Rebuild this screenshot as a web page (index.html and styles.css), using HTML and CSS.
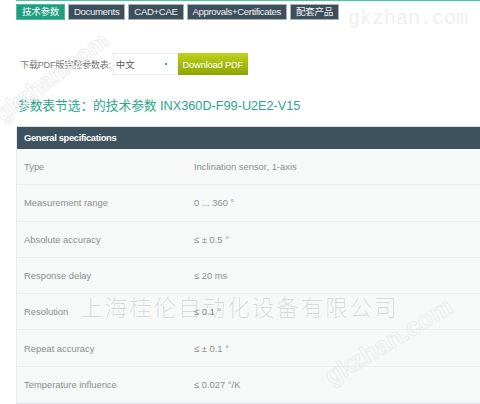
FILE: index.html
```html
<!DOCTYPE html>
<html lang="zh">
<head>
<meta charset="utf-8">
<title>技术参数</title>
<link rel="stylesheet" href="styles.css">
</head>
<body>
<div class="wrap">
  <nav class="tabs">
    <span class="tab active">技术参数</span>
    <span class="tab">Documents</span>
    <span class="tab">CAD+CAE</span>
    <span class="tab">Approvals+Certificates</span>
    <span class="tab">配套产品</span>
  </nav>
  <div class="dl">
    <span class="dl-label">下载PDF版完整参数表:</span>
    <span class="select"><span class="select-text">中文</span><span class="dot"></span></span>
    <span class="btn">Download PDF</span>
  </div>
  <h2 class="title">参数表节选：的技术参数 INX360D-F99-U2E2-V15</h2>
  <div class="spec">
    <div class="spec-head">General specifications</div>
    <div class="row"><span>Type</span><span>Inclination sensor, 1-axis</span></div>
    <div class="row"><span>Measurement range</span><span>0 ... 360 °</span></div>
    <div class="row"><span>Absolute accuracy</span><span>≤ ± 0.5 °</span></div>
    <div class="row"><span>Response delay</span><span>≤ 20 ms</span></div>
    <div class="row"><span>Resolution</span><span>≤ 0.1 °</span></div>
    <div class="row"><span>Repeat accuracy</span><span>≤ ± 0.1 °</span></div>
    <div class="row"><span>Temperature influence</span><span>≤ 0.027 °/K</span></div>
  </div>
</div>
<div class="wm wm-site">gkzhan.com</div>
<div class="wm wm-diag wm-diag-a">gkzhan.com</div>
<div class="wm wm-diag wm-diag-b">gkzhan.com</div>
<div class="wm wm-company">上海桂伦自动化设备有限公司</div>
</body>
</html>
```
FILE: styles.css
```css
html, body {
  margin: 0;
  padding: 0;
  background: #fff;
  overflow: hidden;
}
body {
  width: 480px;
  height: 404px;
  position: relative;
  font-family: "Liberation Sans", Arial, "Noto Sans CJK SC", sans-serif;
}
.wrap {
  padding-left: 16px;
}
.tabs {
  border-top: 1px solid #4fc4aa;
  display: flex;
  gap: 3px;
  padding-top: 3px;
}
.tab {
  box-sizing: border-box;
  height: 16px;
  line-height: 14px;
  padding: 0 5px;
  font-size: 9.6px;
  letter-spacing: -0.35px;
  color: #eef1f3;
  background: #3d4f5c;
  border: 1px solid #a7b1b8;
  white-space: nowrap;
}
.tab.active {
  background: #1e9f7f;
  border-color: #57b89f;
  color: #fff;
}
.dl {
  display: flex;
  align-items: center;
  margin-top: 33px;
  padding-left: 4px;
  height: 22px;
}
.dl-label {
  font-size: 9.2px;
  color: #7a7a7a;
  margin-right: 2px;
  letter-spacing: -0.3px;
  font-family: "Liberation Sans", "Noto Sans CJK SC", sans-serif;
}
.select {
  box-sizing: border-box;
  width: 65px;
  height: 22px;
  border: 1px solid #eeeeee;
  display: flex;
  align-items: center;
  justify-content: space-between;
  padding: 0 10px 0 2px;
  font-size: 9.4px;
  color: #555;
  font-family: "Noto Sans CJK SC", sans-serif;
}
.dot {
  width: 2px;
  height: 2px;
  background: #2aa68a;
}
.btn {
  width: 70px;
  height: 22px;
  background: linear-gradient(#bcd21d, #8ea500);
  color: #fff;
  font-size: 9.4px;
  display: flex;
  align-items: center;
  justify-content: center;
  letter-spacing: -0.2px;
}
.title {
  margin: 23px 0 0 1px;
  font-size: 12.7px;
  line-height: 16px;
  font-weight: normal;
  color: #2aa68b;
  white-space: nowrap;
}
.spec {
  margin-top: 12px;
  width: 480px;
  border: 1px solid #e8ebec;
  border-top-color: #d9dddf;
  background: #f7f9f9;
}
.spec-head {
  height: 22px;
  line-height: 22px;
  background: #3f5260;
  color: #fff;
  font-size: 9.4px;
  font-weight: bold;
  padding-left: 7px;
  letter-spacing: -0.35px;
}
.row {
  box-sizing: border-box;
  display: grid;
  grid-template-columns: 170px 1fr;
  align-items: center;
  height: 36.3px;
  border-bottom: 1px solid #eceeef;
  padding-left: 7px;
  font-size: 9.4px;
  color: #8d8d8d;
}
.wm {
  position: absolute;
  white-space: nowrap;
  pointer-events: none;
}
.wm-site {
  left: 348px;
  top: 7px;
  font-family: "Liberation Mono", monospace;
  font-size: 20px;
  color: #efefef;
}
.wm-company {
  left: 80px;
  top: 290px;
  font-family: "Noto Sans CJK SC", sans-serif;
  font-weight: 300;
  font-size: 22.8px;
  letter-spacing: 1.7px;
  color: rgba(0, 0, 0, 0.12);
}
.wm-diag {
  font-family: "Liberation Sans", sans-serif;
  font-weight: bold;
  color: transparent;
  -webkit-text-stroke: 1px #ededed;
  transform-origin: left bottom;
}
.wm-diag-a {
  left: 6px;
  top: 100px;
  font-size: 23px;
  transform: rotate(-36deg);
}
.wm-diag-b {
  left: 334px;
  top: 362px;
  font-size: 25px;
  transform: rotate(-31deg);
}
```
